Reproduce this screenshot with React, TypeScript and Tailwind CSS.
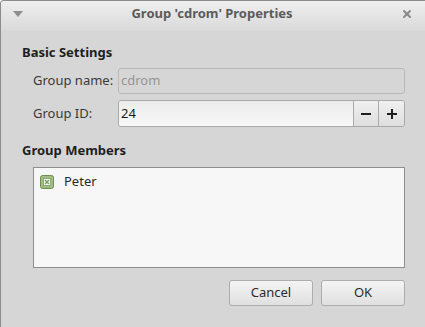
import { X } from "lucide-react";

const font = { fontFamily: '"Noto Sans", "Open Sans", sans-serif' };

const Checkbox = () => (
  <svg width="14" height="14" viewBox="0 0 14 14" className="shrink-0">
    <rect x="0.5" y="0.5" width="13" height="13" rx="2" fill="#9fbd84" stroke="#6f8f55" />
    <rect x="3.5" y="3.5" width="7" height="7" fill="#ffffff" stroke="#7e9e64" strokeWidth="0.8" />
    <path d="M5 5 L9 9 M9 5 L5 9" stroke="#7ea062" strokeWidth="1.6" />
  </svg>
);

const App = () => {
  return (
    <div
      className="w-[425px] h-[327px] overflow-hidden bg-[#d6d6d6] border-l border-t border-[#8c8c8c] rounded-tl-[4px] text-[13px] text-[#2b2b2b]"
      style={font}
    >
      {/* title bar */}
      <div className="h-[30px] pb-[4px] flex items-center px-3 bg-gradient-to-b from-[#efefef] to-[#d9d9d9]">
        <svg width="10" height="7" viewBox="0 0 10 7">
          <path d="M0 0 H10 L5 6 Z" fill="#8e8e8e" />
        </svg>
        <div className="flex-1 text-center font-bold text-[#5b5b5b]">Group 'cdrom' Properties</div>
        <X className="w-[12px] h-[12px] text-[#8a8a8a]" strokeWidth={4} />
      </div>

      <div className="pl-[21px] pr-[20px] pt-[12px]">
        <div className="font-bold leading-[18px] text-[#1e1e1e]">Basic Settings</div>

        <div className="pl-[11px] mt-[7px] flex flex-col gap-[6px]">
          <div className="flex items-center h-[26px]">
            <span className="w-[85px] text-[#3a3a3a]">Group name:</span>
            <div className="flex-1 h-[26px] flex items-center px-[2px] rounded-[3px] border border-[#b9b9b9] text-[#959595]">
              cdrom
            </div>
          </div>
          <div className="flex items-center h-[27px]">
            <span className="w-[85px] text-[#3a3a3a]">Group ID:</span>
            <div className="flex-1 h-[27px] flex rounded-[3px] border border-[#a9a9a9] overflow-hidden">
              <div className="flex-1 flex items-center px-[2px] bg-gradient-to-b from-[#ececec] to-[#f8f8f8] text-[#1a1a1a]">
                24
              </div>
              <div className="w-[25px] flex items-center justify-center border-l border-[#aaaaaa] bg-gradient-to-b from-[#f0f0f0] to-[#dedede]">
                <span className="w-[10px] h-[2px] bg-[#1e1e1e]" />
              </div>
              <div className="w-[26px] flex items-center justify-center border-l border-[#aaaaaa] bg-gradient-to-b from-[#f0f0f0] to-[#dedede] relative">
                <span className="w-[10px] h-[2px] bg-[#1e1e1e]" />
                <span className="absolute w-[2px] h-[10px] bg-[#1e1e1e]" />
              </div>
            </div>
          </div>
        </div>

        <div className="font-bold leading-[18px] text-[#1e1e1e] mt-[14px]">Group Members</div>

        <div className="ml-[11px] mt-[8px] h-[101px] border border-[#8f8f8f] bg-[#f7f7f7] px-[6px] pt-[4px]">
          <div className="flex items-center gap-[10px]">
            <Checkbox />
            <span className="text-[#2a2a2a]">Peter</span>
          </div>
        </div>

        <div className="flex justify-end gap-[8px] mt-[12px]">
          <button className="w-[84px] h-[26px] rounded-[3px] border border-[#adadad] bg-gradient-to-b from-[#f4f4f4] to-[#e0e0e0] text-[#2b2b2b]">
            Cancel
          </button>
          <button className="w-[84px] h-[26px] rounded-[3px] border border-[#adadad] bg-gradient-to-b from-[#f4f4f4] to-[#e0e0e0] text-[#2b2b2b]">
            OK
          </button>
        </div>
      </div>
    </div>
  );
};

export default App;
